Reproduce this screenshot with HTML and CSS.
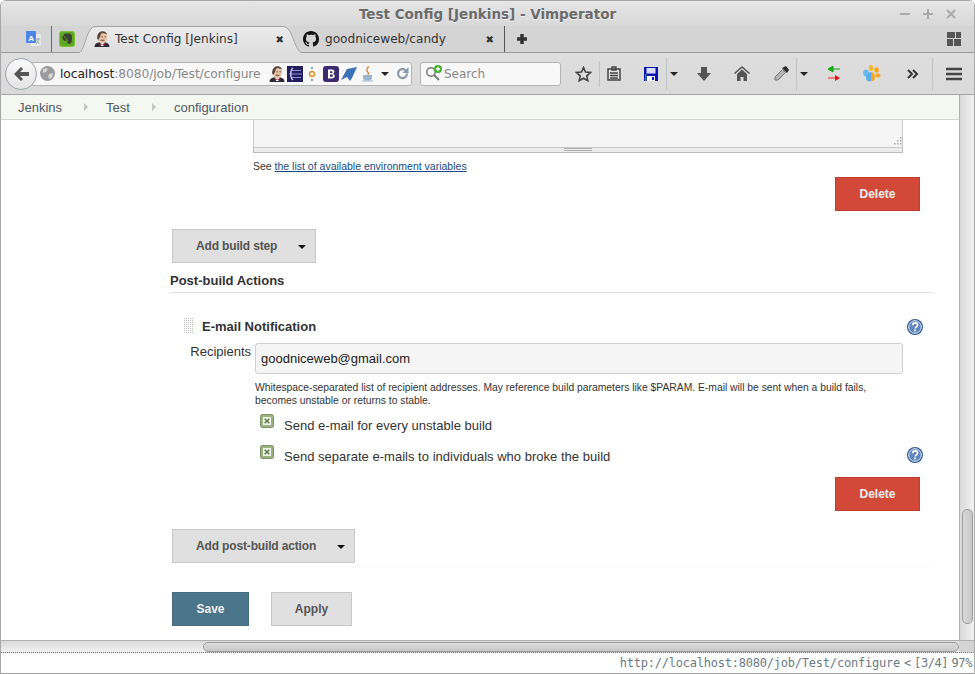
FILE: index.html
```html
<!DOCTYPE html>
<html lang="en">
<head>
  <meta charset="UTF-8">
  <title>Test Config [Jenkins] - Vimperator</title>
  <link rel="stylesheet" href="styles.css">
</head>
<body>
  <svg class="defs" width="0" height="0">
    <defs>
      <linearGradient id="tabfill" x1="0" y1="0" x2="0" y2="1">
        <stop offset="0" stop-color="#ececec"/>
        <stop offset="1" stop-color="#dedede"/>
      </linearGradient>
      <symbol id="butler" viewBox="0 0 16 16">
        <path d="M.5 16c0-2.500 1.500-4 4-4.500h7c2.500.5 4 2 4 4.500z" fill="#2a2a38"/>
        <path d="M6 11.500h4.500L9.500 15h-2.500z" fill="#f4f1ea"/>
        <path d="M5.800 12.300l2.400 1 2.400-1v2.200l-2.400-.9-2.400.9z" fill="#c0282d"/>
        <path d="M3.500 6.500C3.500 3 5.500.5 8.500.5s4.800 2.500 4.500 6c-.2 3-2 5.500-4.500 5.500S3.500 9.500 3.500 6.500z" fill="#eac2a6"/>
        <path d="M3.300 8C2.800 3.500 5 .2 8.500.2c2.300 0 4 1.200 4.700 3.300-2-1.300-4.200-1.700-6.200-1C6.800 4.500 5.500 7 4.700 8.500c-.5 0-1.100-.1-1.400-.5z" fill="#54443c"/>
        <path d="M6 9c1.200-.8 3.200-.8 5 0-.6 1.500-4.300 1.500-5 0z" fill="#7d6152"/>
        <path d="M7.500 5.800h1.300M10.500 5.800h1.200" stroke="#333" stroke-width=".9"/>
      </symbol>
      <symbol id="help" viewBox="0 0 16 16">
        <circle cx="8" cy="8" r="8" fill="#2c5a96"/>
        <circle cx="8" cy="8" r="6.300" fill="#5f86bd" stroke="#e8eef7" stroke-width="1"/>
        <path d="M5.600 6.200c0-1.400 1-2.300 2.500-2.300s2.500.8 2.500 2.100c0 1.800-2.400 1.800-2.400 3.500" fill="none" stroke="#fff" stroke-width="1.600"/>
        <rect x="7.200" y="10.500" width="1.800" height="1.800" fill="#fff"/>
      </symbol>
      <symbol id="checked" viewBox="0 0 14 14">
        <rect x=".5" y=".5" width="13" height="13" rx="2" fill="#9db37f" stroke="#7a9060"/>
        <rect x="3" y="3" width="8" height="8" fill="#f1f4ec"/>
        <path d="M4.700 4.700l4.600 4.600M9.300 4.700l-4.600 4.600" stroke="#5f7a4a" stroke-width="1.600"/>
      </symbol>
    </defs>
  </svg>

  <div class="window">
    <div class="titlebar">
      <span class="title">Test Config [Jenkins] - Vimperator</span>
      <span class="win-btns">
        <svg width="10" height="10" viewBox="0 0 10 10"><path d="M0 5h10" stroke="#aaa" stroke-width="2"/></svg>
        <svg width="10" height="10" viewBox="0 0 10 10"><path d="M0 5h10M5 0v10" stroke="#aaa" stroke-width="2"/></svg>
        <svg width="10" height="10" viewBox="0 0 10 10"><path d="M1 1l8 8M9 1l-8 8" stroke="#aaa" stroke-width="2"/></svg>
      </span>
    </div>

    <div class="tabstrip">
      <span class="pinned translate">
        <svg width="15" height="15" viewBox="0 0 15 15">
          <rect x="5" y="3" width="10" height="12" fill="#e8e8e8"/>
          <rect x="0" y="0" width="10" height="12" rx="1" fill="#4a86e8"/>
          <text x="2.200" y="9.500" class="translate-a">A</text>
          <path d="M9 8h5M11.500 7v1.500M10 13l3-4.500M10.500 9.500l3 3.500" stroke="#9aa" fill="none"/>
        </svg>
      </span>
      <span class="pinned evernote">
        <svg width="16" height="16" viewBox="0 0 16 16">
          <rect width="16" height="16" rx="3" fill="#7cc23a"/>
          <rect x="1" y="1" width="14" height="14" rx="2.500" fill="#5fa823"/>
          <path d="M4.500 4.200h1.200V3h4.800c1.200 0 1.700.8 1.900 2.100.3 2.300.2 5.500-.7 6.700-.5.800-2.600.8-3.100 0-.4-.7 0-1.700 1-1.700M7.500 9.300H5.300C4.200 9.300 3.800 7 3.800 5.200z" fill="#3a4232" stroke="#3a4232"/>
        </svg>
      </span>
      <div class="tab active">
        <svg class="tab-shape" width="228" height="28" viewBox="0 0 228 28"><path d="M0 27.500C9 27.500 8 .5 19 .5H206C217 .5 216 27.500 228 27.500" fill="url(#tabfill)" stroke="#a4a4a4"/></svg>
        <svg class="tab-icon" width="16" height="16"><use href="#butler"/></svg>
        <span class="tab-label">Test Config [Jenkins]</span>
        <span class="tab-close">✖</span>
      </div>
      <div class="tab other">
        <svg class="tab-icon" width="16" height="16" viewBox="0 0 16 16"><path d="M8 0C3.580 0 0 3.580 0 8c0 3.540 2.290 6.530 5.470 7.590.4.070.55-.17.55-.38 0-.19-.01-.82-.01-1.490-2.010.37-2.530-.49-2.690-.94-.09-.23-.48-.94-.82-1.130-.28-.15-.68-.52-.01-.53.630-.01 1.080.58 1.230.82.720 1.210 1.870.87 2.330.66.070-.52.280-.87.510-1.070-1.780-.2-3.640-.89-3.640-3.950 0-.87.310-1.590.82-2.150-.08-.2-.36-1.020.08-2.120 0 0 .67-.21 2.200.82.640-.18 1.320-.27 2-.27s1.360.09 2 .27c1.530-1.040 2.200-.82 2.200-.82.440 1.100.16 1.920.08 2.120.51.560.82 1.270.82 2.150 0 3.070-1.870 3.750-3.650 3.950.290.250.540.730.540 1.480 0 1.070-.01 1.930-.01 2.200 0 .21.150.46.550.38A8.010 8.010 0 0 0 16 8c0-4.420-3.580-8-8-8z" fill="#111"/></svg>
        <span class="tab-label">goodniceweb/candy</span>
        <span class="tab-close">✖</span>
      </div>
      <span class="new-tab">
        <svg width="12" height="12" viewBox="0 0 12 12"><path d="M6 1v10M1 6h10" stroke="#333" stroke-width="3.500"/></svg>
      </span>
      <span class="tab-groups">
        <svg width="14" height="14" viewBox="0 0 14 14" fill="#555"><rect width="8" height="6"/><rect x="9" width="5" height="6"/><rect y="7" width="6" height="7"/><rect x="7" y="7" width="7" height="7"/></svg>
      </span>
    </div>

    <div class="navbar">
      <span class="back">
        <svg width="16" height="14" viewBox="0 0 16 14"><path d="M8 0l2 2-3 3h9v4H7l3 3-2 2-7-7z" fill="#555"/></svg>
      </span>
      <div class="urlbar">
        <svg class="globe" width="15" height="15" viewBox="0 0 15 15"><circle cx="7.500" cy="7.500" r="7.500" fill="#9b9b9b"/><path d="M3 3c2-1 4-1 5 0L6 6 3 7zM9 8l4-1c0 3-1 5-3 6l-2-2z" fill="#d6d6d6"/></svg>
        <span class="url"><span class="host">localhost</span>:8080/job/Test/configure</span>
        <span class="url-icons">
          <svg width="16" height="16"><use href="#butler"/></svg>
          <svg width="16" height="16" viewBox="0 0 16 16"><rect width="16" height="16" fill="#241f5c"/><path d="M2 8h13M5 4.500h9M5 11.500h9" stroke="#8f8fe0"/><path d="M6 2C3 4 3 12 6 14" stroke="#c7c7f5" fill="none" stroke-width="1.500"/></svg>
          <svg class="ic-o" width="6" height="16" viewBox="0 0 6 16"><circle cx="3" cy="8" r="2.500" fill="none" stroke="#f08a1d" stroke-width="1.500"/><path d="M3 1v2M3 13v2" stroke="#4a86e8" stroke-width="1.500"/></svg>
          <svg class="ic-b" width="16" height="16" viewBox="0 0 16 16"><rect width="16" height="16" rx="3" fill="#3b2a70"/><path d="M5 3.500h4c3 0 3 3.500 1 4.200 2.500.5 2.500 4.800-1 4.800H5zM7 5.200v1.800h1.800c1 0 1-1.800 0-1.800zM7 8.600v2.200h2c1.300 0 1.300-2.200 0-2.200z" fill="#fff" fill-rule="evenodd"/></svg>
          <svg width="16" height="16" viewBox="0 0 16 16"><path d="M16 1L6 3 0 14l6-3 3 4 2-3z" fill="#3b72b8"/></svg>
          <svg class="ic-java" width="14" height="16" viewBox="0 0 14 16"><path d="M7 0c1 2-2 3-1 5s2 1 1 4" stroke="#e07a20" fill="none" stroke-width="1.300"/><path d="M2 9h9v3c0 2-2 2.500-4.500 2.500S2 14 2 12z" fill="#9bb6cc"/><path d="M1 15h11" stroke="#9bb6cc"/></svg>
        </span>
        <span class="arrow-down url-drop"></span>
        <svg class="reload" width="13" height="13" viewBox="0 0 13 13"><path d="M11 6.500a4.500 4.500 0 1 1-1.500-3.300" fill="none" stroke="#8a9aa8" stroke-width="2.200"/><path d="M12.500 0v6h-6z" fill="#8a9aa8"/></svg>
      </div>
      <div class="searchbar">
        <svg width="19" height="17" viewBox="0 0 19 17"><circle cx="6" cy="7" r="4.200" fill="none" stroke="#777" stroke-width="1.500"/><path d="M9 10l5 5" stroke="#777" stroke-width="2"/><circle cx="13" cy="4" r="4" fill="#3fae2a"/><path d="M13 1.800v4.400M10.800 4h4.400" stroke="#fff" stroke-width="1.300"/></svg>
        <span class="search-text">Search</span>
      </div>
      <div class="tools">
        <span class="tool t-star"><svg width="17" height="16" viewBox="0 0 17 16"><path d="M8.500 1.500l2 4.500 5 .5-3.700 3.300 1 4.900-4.300-2.500-4.300 2.500 1-4.900L1.500 6.500l5-.5z" fill="none" stroke="#444" stroke-width="1.600"/></svg></span>
        <span class="tool-sep s-star"></span>
        <span class="tool t-list"><svg width="14" height="15" viewBox="0 0 14 15"><path d="M1 3h12v11H1z" fill="#e4e4e4" stroke="#444" stroke-width="1.500"/><path d="M5 1h4v3H5zM3 7h8M3 9.500h8M3 12h8" stroke="#444" stroke-width="1.300" fill="none"/></svg></span>
        <span class="tool t-save"><svg width="14" height="14" viewBox="0 0 14 14"><rect width="14" height="14" fill="#0a14b4"/><rect x="2.500" y="1" width="9" height="5.500" fill="#d9dcf5"/><rect x="1" y="7" width="1.500" height="7" fill="#1f9b3c"/><rect x="3" y="9" width="8" height="5" fill="#fff"/><rect x="8" y="10" width="2" height="3" fill="#0a14b4"/></svg></span>
        <span class="tool-sep s-save"></span>
        <span class="arrow-down t-save-drop"></span>
        <span class="tool t-down"><svg width="14" height="14" viewBox="0 0 14 14"><path d="M4 0h6v6h4l-7 8-7-8h4z" fill="#555"/></svg></span>
        <span class="tool t-home"><svg width="16" height="15" viewBox="0 0 16 15"><path d="M8 0l8 7-1 1-7-6-7 6-1-1z" fill="#555"/><path d="M3 8l5-4.500L13 8v7H9.500v-4h-3v4H3z" fill="#555"/></svg></span>
        <span class="tool t-dropper"><svg width="16" height="15" viewBox="0 0 16 15"><path d="M9.500 3.500l3 3L5 14H2v-3z" fill="#b5b5b5" stroke="#777"/><path d="M9 2l5 5 2-3-3-4z" fill="#2b2b2b"/></svg></span>
        <span class="tool-sep s-dropper"></span>
        <span class="arrow-down t-dropper-drop"></span>
        <span class="tool t-arrows"><svg width="14" height="15" viewBox="0 0 14 15"><path d="M13 3H6M6 0L1 3l5 3z" fill="#12a812" stroke="#12a812"/><path d="M1 12h7" stroke="#f06060" stroke-width="1.500"/><path d="M8 9l5 3-5 3z" fill="#e81010"/></svg></span>
        <span class="tool t-paw"><svg width="18" height="18" viewBox="0 0 18 18"><ellipse cx="3" cy="8" rx="2.800" ry="3.500" fill="#6bb8ef"/><ellipse cx="8" cy="3" rx="2.200" ry="3" fill="#f5b731"/><ellipse cx="13.500" cy="5" rx="2.300" ry="2.800" fill="#f5a623"/><ellipse cx="15" cy="10.500" rx="2.600" ry="2" fill="#f5a623"/><path d="M8 7c-3 0-5 3-5 6 0 3 3 4 5 3z" fill="#5bb0ec"/><path d="M8 7c3 0 4 3 4 5 0 3-2 5-4 4z" fill="#f5a623"/></svg></span>
        <span class="tool t-more"><svg width="12" height="10" viewBox="0 0 12 10"><path d="M1 1l4 4-4 4M6 1l4 4-4 4" fill="none" stroke="#333" stroke-width="2"/></svg></span>
        <span class="tool-sep s-more"></span>
        <span class="tool t-menu"><svg width="16" height="14" viewBox="0 0 16 14"><path d="M0 2h16M0 7h16M0 12h16" stroke="#444" stroke-width="2.400"/></svg></span>
      </div>
    </div>

    <div class="viewport">
      <div class="page">
        <div class="content">
          <div class="breadcrumbs">
            <a>Jenkins</a><span class="crumb-sep"></span>
            <a>Test</a><span class="crumb-sep"></span>
            <a>configuration</a>
          </div>
          <div class="config">
            <div class="textarea-wrap">
              <div class="textarea">
                <svg class="grip" width="10" height="10" viewBox="0 0 10 10" fill="#aaa"><rect x="8" y="0" width="1.500" height="1.500"/><rect x="5" y="3" width="1.500" height="1.500"/><rect x="8" y="3" width="1.500" height="1.500"/><rect x="2" y="6" width="1.500" height="1.500"/><rect x="5" y="6" width="1.500" height="1.500"/><rect x="8" y="6" width="1.500" height="1.500"/></svg>
              </div>
              <div class="textarea-handle"><span class="handle-lines"></span></div>
              <p class="note">See <a href="#">the list of available environment variables</a></p>
            </div>
            <div class="row-delete first"><button class="btn btn-delete">Delete</button></div>
            <button class="btn btn-add step">Add build step<span class="arrow-down"></span></button>

            <h3 class="section">Post-build Actions</h3>

            <div class="block-head">
              <span class="drag"></span>
              <b>E-mail Notification</b>
              <svg class="help" width="16" height="16"><use href="#help"/></svg>
            </div>
            <div class="field">
              <label>Recipients</label>
              <div class="input">goodniceweb@gmail.com</div>
            </div>
            <p class="hint">Whitespace-separated list of recipient addresses. May reference build parameters like $PARAM. E-mail will be sent when a build fails, becomes unstable or returns to stable.</p>
            <div class="check one">
              <svg width="14" height="14"><use href="#checked"/></svg>
              <span>Send e-mail for every unstable build</span>
            </div>
            <div class="check two">
              <svg width="14" height="14"><use href="#checked"/></svg>
              <span>Send separate e-mails to individuals who broke the build</span>
              <svg class="help" width="16" height="16"><use href="#help"/></svg>
            </div>
            <div class="row-delete"><button class="btn btn-delete">Delete</button></div>
            <button class="btn btn-add post">Add post-build action<span class="arrow-down"></span></button>
            <div class="actions">
              <button class="btn btn-save">Save</button>
              <button class="btn btn-apply">Apply</button>
            </div>
          </div>
        </div>
        <div class="vscroll"><span class="vthumb"></span></div>
      </div>
      <div class="hscroll"><span class="hthumb"></span><span class="corner"></span></div>
    </div>

    <div class="statusline">
      <span class="status-url">http://localhost:8080/job/Test/configure</span>
      <span class="status-info">&lt; [3/4] 97%</span>
    </div>
  </div>
</body>
</html>
```
FILE: styles.css
```css
* {
  box-sizing: border-box;
}

html, body {
  margin: 0;
  padding: 0;
  height: 100%;
  overflow: hidden;
  background: #fff;
}

.defs {
  position: absolute;
}

.window {
  width: 975px;
  height: 674px;
  display: flex;
  flex-direction: column;
  font-family: "Liberation Sans", Arial, sans-serif;
  border-left: 1px solid #a8a8a8;
  border-right: 1px solid #a8a8a8;
  border-radius: 6px 6px 0 0;
  overflow: hidden;
}

/* title bar */
.titlebar {
  height: 26px;
  flex: none;
  display: flex;
  align-items: center;
  justify-content: center;
  background: linear-gradient(#e6e6e6, #d8d8d8);
  border-top: 1px solid #a8a8a8;
  position: relative;
}

.title {
  font: bold 13.5px "DejaVu Sans", sans-serif;
  color: #6b6b6b;
  text-shadow: 0 1px 0 #f2f2f2;
}

.win-btns {
  position: absolute;
  right: 18px;
  top: 8px;
  display: flex;
  gap: 13px;
}

/* tabs */
.tabstrip {
  height: 27px;
  flex: none;
  display: flex;
  align-items: stretch;
  background: #d4d4d4;
  border-bottom: 1px solid #9c9c9c;
  position: relative;
}

.pinned {
  display: flex;
  align-items: center;
  padding-bottom: 1px;
}

.translate {
  width: 51px;
  padding-left: 25px;
  border-right: 1px solid #6a6a6a;
}

.evernote {
  padding-left: 7px;
  width: 25px;
}

.tab {
  position: relative;
  display: flex;
  align-items: center;
  font: 12.1px "DejaVu Sans", sans-serif;
  color: #333;
}

.tab.active {
  width: 228px;
  padding-left: 17px;
}

.tab-shape {
  position: absolute;
  left: 0;
  top: 0;
}

.tab.other {
  width: 202px;
  margin-left: -2px;
  border-right: 1px solid #555;
}

.tab-icon {
  flex: none;
  position: relative;
}

.tab-label {
  position: relative;
  margin-left: 5px;
  flex: 1;
  white-space: nowrap;
}

.tab.other .tab-label {
  margin-left: 6px;
}

.tab-close {
  position: relative;
  font-size: 10px;
  color: #333;
  margin-right: 21px;
}

.tab.other .tab-close {
  margin-right: 10px;
}

.new-tab {
  display: flex;
  align-items: center;
  padding-left: 11px;
}

.tab-groups {
  display: flex;
  align-items: center;
  margin-left: auto;
  padding-right: 13px;
}

/* nav bar */
.navbar {
  height: 42px;
  flex: none;
  display: flex;
  align-items: center;
  background: linear-gradient(#dedede, #dadada);
  border-bottom: 1px solid #a4a4a4;
  position: relative;
  padding-left: 4px;
}

.back {
  width: 32px;
  height: 32px;
  flex: none;
  display: flex;
  align-items: center;
  justify-content: center;
  border-radius: 50%;
  background: linear-gradient(#fafafa, #e4e4e4);
  border: 1px solid #9aa3ad;
  position: relative;
  z-index: 1;
}

.urlbar {
  width: 380px;
  height: 24px;
  margin-left: -5px;
  padding-left: 7px;
  display: flex;
  align-items: center;
  background: #f8f8f8;
  border: 1px solid #b4b4b4;
  border-radius: 0 3px 3px 0;
}

.globe {
  flex: none;
}

.url {
  font: 12.3px "DejaVu Sans", sans-serif;
  color: #888;
  margin-left: 5px;
  letter-spacing: -.1px;
  white-space: nowrap;
}

.host {
  color: #222;
}

.url-icons {
  display: flex;
  align-items: center;
  margin-left: 8px;
}

.url-icons svg {
  flex: none;
}

.url-icons svg + svg {
  margin-left: 2px;
}

.url-icons .ic-o {
  margin: 0 8px 0 6px;
}

.url-icons .ic-b {
  margin-left: 0;
}

.url-icons .ic-java {
  margin-left: 4px;
}

.arrow-down {
  display: inline-block;
  width: 0;
  height: 0;
  border-left: 4px solid transparent;
  border-right: 4px solid transparent;
  border-top: 4px solid #222;
}

.url-drop {
  margin-left: 6px;
}

.reload {
  margin-left: 7px;
  flex: none;
}

.searchbar {
  width: 141px;
  height: 24px;
  margin-left: 8px;
  padding-left: 4px;
  display: flex;
  align-items: center;
  background: #f8f8f8;
  border: 1px solid #b4b4b4;
  border-radius: 3px;
}

.search-text {
  font: 12px "DejaVu Sans", sans-serif;
  color: #888;
}

.tools {
  flex: 1;
  display: flex;
  align-items: center;
  height: 100%;
}

.tool {
  display: flex;
  align-items: center;
}

.tool-sep {
  width: 1px;
  height: 32px;
  background: #c2c2c2;
  flex: none;
}

.t-star { margin-left: 14px; }
.s-star { height: 26px; margin-left: 7px; }
.t-list { margin-left: 7px; }
.t-save { margin-left: 23px; }
.s-save { margin-left: 8px; }
.t-save-drop { margin-left: 3px; }
.t-down { margin-left: 19px; }
.t-home { margin-left: 23px; }
.t-dropper { margin-left: 23px; }
.s-dropper { margin-left: 7px; }
.t-dropper-drop { margin-left: 3px; }
.t-arrows { margin-left: 19px; }
.t-paw { margin-left: 22px; }
.t-more { margin-left: 26px; }
.s-more { margin-left: 13px; }
.t-menu { margin-left: 13px; }

/* page */
.viewport {
  flex: 1;
  display: flex;
  flex-direction: column;
  min-height: 0;
}

.page {
  flex: 1;
  display: flex;
  min-height: 0;
}

.content {
  flex: 1;
  display: flex;
  flex-direction: column;
  min-width: 0;
}

/* breadcrumbs */
.breadcrumbs {
  height: 25px;
  flex: none;
  display: flex;
  align-items: center;
  padding-left: 17px;
  background: #f5f7f1;
  border-bottom: 1px solid #d3d6cf;
  font-size: 13px;
  color: #4e5a66;
}

.crumb-sep {
  width: 0;
  height: 0;
  border-left: 4px solid #c4c4c4;
  border-top: 4px solid transparent;
  border-bottom: 4px solid transparent;
  margin: 0 18px 0 22px;
}

.config {
  flex: 1;
  padding-left: 169px;
  position: relative;
  color: #333;
  overflow: hidden;
}

.textarea-wrap {
  padding-left: 83px;
  width: 733px;
}

.textarea {
  height: 28px;
  background: #f5f5f5;
  border: 1px solid #c8c8c8;
  border-top: none;
  position: relative;
}

.grip {
  position: absolute;
  right: 0;
  bottom: 0;
}

.textarea-handle {
  height: 5px;
  background: #ececec;
  border: 1px solid #bcbcbc;
  border-top: none;
  display: flex;
  justify-content: center;
}

.handle-lines {
  width: 28px;
  height: 3px;
  border-top: 1px solid #b0b0b0;
  border-bottom: 1px solid #b0b0b0;
}

.note {
  margin: 7px 0 0;
  font-size: 10.5px;
  line-height: 13px;
}

.note a {
  color: #204a87;
  text-decoration: underline;
}

.btn {
  display: block;
  height: 34px;
  padding: 0;
  font: bold 12px "Liberation Sans", Arial, sans-serif;
  border-radius: 0;
  cursor: pointer;
}

.row-delete {
  width: 750px;
  display: flex;
  justify-content: flex-end;
}

.row-delete.first {
  margin-top: 4px;
}

.btn-delete {
  width: 85px;
  background: #d24939;
  border: 1px solid #c03c2d;
  color: #eee;
}

.btn-add {
  position: relative;
  margin: 18px 0 0 2px;
  background: #e0e0e0;
  border: 1px solid #c8c8c8;
  color: #555;
  text-align: left;
  padding-left: 23px;
  letter-spacing: -.15px;
}

.btn-add .arrow-down {
  position: absolute;
  right: 9px;
  top: 15px;
  border-top: 4px solid #111;
}

.btn-add.step {
  width: 144px;
}

.btn-add.post {
  width: 183px;
}

.section {
  width: 763px;
  margin: 10px 0 0;
  padding-bottom: 4px;
  font-size: 13px;
  line-height: 15px;
  color: #333;
  border-bottom: 1px solid #e0e0e0;
}

.block-head {
  position: relative;
  display: flex;
  align-items: center;
  margin-top: 25px;
  height: 16px;
  font-size: 13px;
  padding-left: 13px;
}

.drag {
  width: 11px;
  height: 16px;
  margin-right: 8px;
  background-image: conic-gradient(#c0c0c0 25%, transparent 0);
  background-size: 2px 2px;
}

.block-head .help {
  position: absolute;
  left: 737px;
  top: 1px;
}

.field {
  display: flex;
  margin-top: 9px;
  height: 31px;
}

.field label {
  width: 81px;
  text-align: right;
  font-size: 13px;
  line-height: 17px;
}

.input {
  margin-left: 4px;
  width: 648px;
  height: 31px;
  padding-left: 5px;
  font-size: 13px;
  line-height: 29px;
  color: #222;
  background: #f5f5f5;
  border: 1px solid #cfcfcf;
  border-radius: 3px;
}

.hint {
  width: 640px;
  margin: 7px 0 0 85px;
  font-size: 10.33px;
  line-height: 13px;
}

.check {
  position: relative;
  display: flex;
  align-items: flex-start;
  margin-left: 90px;
  font-size: 13px;
  letter-spacing: .02px;
}

.check svg {
  flex: none;
  margin-top: -3px;
}

.check span {
  margin: 1px 0 0 10px;
}

.check.one {
  margin-top: 10px;
  height: 31px;
}

.check.two {
  height: 29px;
}

.check .help {
  position: absolute;
  left: 647px;
  top: -1px;
  margin: 0;
}

.actions {
  display: flex;
  margin: 3px 0 0 2px;
  padding-top: 25px;
  gap: 22px;
  width: 760px;
  border-top: 1px dotted #f2f2f2;
}

.btn-save {
  width: 77px;
  background: #4b758b;
  border: 1px solid #456e83;
  color: #f0f0f0;
}

.btn-apply {
  width: 81px;
  background: #e0e0e0;
  border: 1px solid #c8c8c8;
  color: #555;
}

/* scrollbars */
.vscroll {
  width: 15px;
  flex: none;
  background: linear-gradient(90deg, #dadada, #f2f2f2);
  border-left: 1px solid #b0b0b0;
  position: relative;
}

.vthumb {
  position: absolute;
  left: 2px;
  right: 1px;
  top: 414px;
  height: 115px;
  background: linear-gradient(90deg, #d8d8d8, #c8c8c8);
  border: 1px solid #9c9c9c;
  border-radius: 5px;
}

.hscroll {
  height: 13px;
  flex: none;
  position: relative;
  background: linear-gradient(#dadada, #f2f2f2);
  border-top: 1px solid #b0b0b0;
  border-bottom: 1px dotted #777;
}

.hthumb {
  position: absolute;
  left: 202px;
  right: 15px;
  top: 1px;
  height: 10px;
  background: linear-gradient(#dcdcdc, #c8c8c8);
  border: 1px solid #9c9c9c;
  border-radius: 5px;
}

.corner {
  position: absolute;
  right: 0;
  top: 0;
  width: 15px;
  height: 11px;
  background: #d4d4d4;
}

/* vimperator status */
.statusline {
  height: 21px;
  flex: none;
  display: flex;
  justify-content: flex-end;
  align-items: center;
  padding-right: 2px;
  background: #fff;
  border-bottom: 1px solid #9c9c9c;
  font: 12px "DejaVu Sans Mono", monospace;
  color: #6a7a86;
  white-space: nowrap;
}

.status-url {
  letter-spacing: -.22px;
}

.status-info {
  margin-left: 4px;
  letter-spacing: -.4px;
  word-spacing: -3.5px;
}

.translate-a {
  font: bold 8px "Liberation Sans", sans-serif;
  fill: #fff;
}
```
